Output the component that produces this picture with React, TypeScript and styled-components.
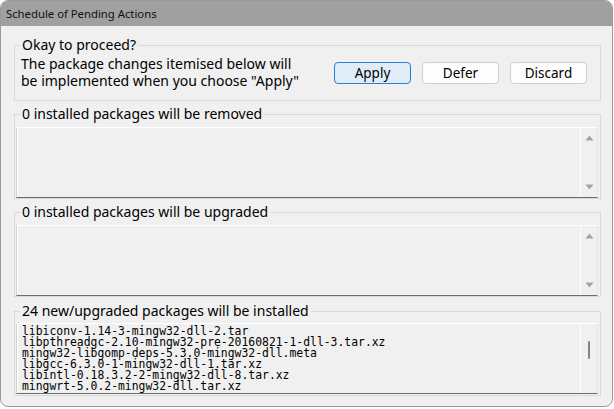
import React from "react";
import styled, { createGlobalStyle } from "styled-components";

const Global = createGlobalStyle`
  html, body { margin: 0; padding: 0; background: #ffffff; }
  body { font-family: "Noto Sans", "Open Sans", sans-serif; color: #000; }
  * { box-sizing: border-box; }
`;

const Window = styled.div`
  width: 613px;
  height: 407px;
  border: 1px solid #999999;
  border-radius: 8px;
  overflow: hidden;
  background: #f0f0f0;
  display: flex;
  flex-direction: column;
`;

const TitleBar = styled.div`
  height: 25px;
  flex: none;
  background: #a0a0a0;
  display: flex;
  align-items: center;
  padding: 0 0 1px 5px;
  font-size: 11.3px;
  color: #111;
`;

const Body = styled.div`
  flex: 1;
  display: flex;
  flex-direction: column;
  padding: 11px 11px 0 13px;
`;

const Group = styled.fieldset<{ $gap: number; $pt: number; $pb: number }>`
  margin: ${(p) => p.$gap}px 0 0 0;
  padding: ${(p) => p.$pt}px 2px ${(p) => p.$pb}px 1px;
  border: 1px solid #d9d9d9;
  min-width: 0;
`;

const Legend = styled.legend`
  margin-left: 4px;
  padding: 0 2px;
  font-size: 14px;
  line-height: 16px;
  color: #000;
`;

const ProceedRow = styled.div`
  display: flex;
  align-items: center;
  padding: 0 11px 0 5px;
`;

const Message = styled.div`
  flex: 1;
  font-size: 14px;
  line-height: 17px;
`;

const Buttons = styled.div`
  display: flex;
  gap: 11px;
  margin-top: 1px;
`;

const Button = styled.button<{ $primary?: boolean }>`
  width: 77px;
  height: 22px;
  padding: 0;
  font-family: "Noto Sans", "Open Sans", sans-serif;
  font-size: 13.5px;
  color: #000;
  border-radius: 4px;
  border: 1px solid ${(p) => (p.$primary ? "#2a7fd0" : "#d0d0d0")};
  background: ${(p) => (p.$primary ? "#e0edf9" : "#fdfdfd")};
`;

const ListBox = styled.div`
  height: 71px;
  display: flex;
  background: #f0f0f0;
  border-top: 1px solid #ffffff;
  border-left: 1px solid #d2d2d2;
  border-right: 1px solid #e6e6e6;
  border-bottom: 1px solid #6c6c6c;
  box-shadow: inset 1px 0 0 #ffffff;
`;

const ListContent = styled.div`
  flex: 1;
  overflow: hidden;
  padding: 2px 0 0 5px;
  font-family: "DejaVu Sans Mono", "Liberation Mono", monospace;
  font-size: 11.4px;
  line-height: 11px;
  white-space: pre;
  color: #000;
`;

const ListLine = styled.div`
  height: 11px;
`;

const ScrollBar = styled.div<{ $arrows?: boolean }>`
  width: 17px;
  flex: none;
  border-left: 1px solid #ffffff;
  display: flex;
  flex-direction: column;
  align-items: center;
  justify-content: ${(p) => (p.$arrows ? "space-between" : "flex-start")};
  padding: ${(p) => (p.$arrows ? "7px 0 7px" : "17px 0 0")};
`;

const Thumb = styled.div`
  width: 2px;
  height: 18px;
  border-radius: 1px;
  background: #858585;
  margin-left: -1px;
`;

const Arrow = ({ down }: { down?: boolean }) => (
  <svg width="9" height="6" viewBox="0 0 9 6">
    <path
      d={down ? "M0.5 0.5 L8.5 0.5 L4.5 5.5 Z" : "M0.5 5.5 L8.5 5.5 L4.5 0.5 Z"}
      fill="#a3a3a3"
    />
  </svg>
);

const packages = [
  "libiconv-1.14-3-mingw32-dll-2.tar",
  "libpthreadgc-2.10-mingw32-pre-20160821-1-dll-3.tar.xz",
  "mingw32-libgomp-deps-5.3.0-mingw32-dll.meta",
  "libgcc-6.3.0-1-mingw32-dll-1.tar.xz",
  "libintl-0.18.3.2-2-mingw32-dll-8.tar.xz",
  "mingwrt-5.0.2-mingw32-dll.tar.xz",
];

export default function App() {
  return (
    <>
      <Global />
      <Window>
        <TitleBar>Schedule of Pending Actions</TitleBar>
        <Body>
          <Group $gap={0} $pt={2} $pb={11}>
            <Legend>Okay to proceed?</Legend>
            <ProceedRow>
              <Message>
                The package changes itemised below will
                <br />
                be implemented when you choose "Apply"
              </Message>
              <Buttons>
                <Button $primary>Apply</Button>
                <Button>Defer</Button>
                <Button>Discard</Button>
              </Buttons>
            </ProceedRow>
          </Group>
          <Group $gap={5} $pt={5} $pb={0}>
            <Legend>0 installed packages will be removed</Legend>
            <ListBox>
              <ListContent />
              <ScrollBar $arrows>
                <Arrow />
                <Arrow down />
              </ScrollBar>
            </ListBox>
          </Group>
          <Group $gap={5} $pt={5} $pb={0}>
            <Legend>0 installed packages will be upgraded</Legend>
            <ListBox>
              <ListContent />
              <ScrollBar $arrows>
                <Arrow />
                <Arrow down />
              </ScrollBar>
            </ListBox>
          </Group>
          <Group $gap={6} $pt={4} $pb={1}>
            <Legend>24 new/upgraded packages will be installed</Legend>
            <ListBox>
              <ListContent>
                {packages.map((p) => (
                  <ListLine key={p}>{p}</ListLine>
                ))}
              </ListContent>
              <ScrollBar>
                <Thumb />
              </ScrollBar>
            </ListBox>
          </Group>
        </Body>
      </Window>
    </>
  );
}
